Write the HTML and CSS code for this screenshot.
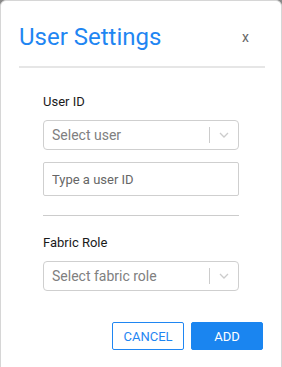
FILE: index.html
```html
<!DOCTYPE html>
<html>
<head>
    <title>User Settings</title>
    <link rel="stylesheet" href="styles.css">
</head>
<body>
    <div class="modal">
        <div class="modal-header">
            <h2 class="modal-title">User Settings</h2>
            <span class="close">x</span>
        </div>

        <div class="modal-body">
            <div class="field">
                <label>User ID</label>
                <div class="select">
                    <span class="select-value">Select user</span>
                    <span class="select-sep"></span>
                    <span class="select-arrow">
                        <svg width="10" height="6" viewBox="0 0 10 6"><path d="M1 1l4 4 4-4" fill="none" stroke="#ccc" stroke-width="1.3"/></svg>
                    </span>
                </div>
            </div>

            <input class="text-input" type="text" placeholder="Type a user ID">

            <hr class="divider">

            <div class="field">
                <label>Fabric Role</label>
                <div class="select">
                    <span class="select-value">Select fabric role</span>
                    <span class="select-sep"></span>
                    <span class="select-arrow">
                        <svg width="10" height="6" viewBox="0 0 10 6"><path d="M1 1l4 4 4-4" fill="none" stroke="#ccc" stroke-width="1.3"/></svg>
                    </span>
                </div>
            </div>
        </div>

        <div class="modal-footer">
            <button class="btn btn-outline">CANCEL</button>
            <button class="btn btn-primary">ADD</button>
        </div>
    </div>
</body>
</html>
```

FILE: styles.css
```css
html, body { margin: 0; padding: 0; background: #8a8a8a; }
body { font-family: Roboto, Arial, sans-serif; }
.modal { width: 282px; height: 380px; background: #fff; border: 1px solid #d6d6d6; border-radius: 6px 6px 0 0; box-sizing: border-box; }
.modal-header { display: flex; align-items: center; justify-content: space-between; margin: 0 16px 0 18px; padding: 21px 0 14px; border-bottom: 2px solid #e6e6e6; }
.modal-title { margin: 0; font-size: 24px; font-weight: 400; color: #1f86f2; line-height: 30px; }
.close { color: #666; font-size: 14px; margin-right: 16px; margin-top: -1px; }
.modal-body { padding: 26px 42px 0 42px; }
.field label { display: block; font-size: 13px; color: #1a1a1a; margin-bottom: 10px; line-height: 16px; }
.select { display: flex; align-items: center; height: 30px; border: 1px solid #cfcfcf; border-radius: 4px; box-sizing: border-box; }
.select-value { flex: 1; padding-left: 8px; font-size: 14px; color: #808080; }
.select-sep { width: 1px; height: 16px; background: #cccccc; }
.select-arrow { width: 28px; display: flex; justify-content: center; }
.text-input { display: block; width: 100%; box-sizing: border-box; height: 34px; margin-top: 12px; padding: 0 8px; border: 1px solid #cfcfcf; border-radius: 2px; font-family: Roboto, Arial, sans-serif; font-size: 13px; }
.text-input::placeholder { color: #666; }
.divider { border: none; border-top: 1px solid #cccccc; margin: 19px 0 19px; }
.modal-footer { display: flex; justify-content: flex-end; gap: 7px; padding: 31px 18px 0 0; }
.btn { height: 28px; font-family: Roboto, Arial, sans-serif; font-size: 13px; border-radius: 2px; cursor: pointer; padding: 0; }
.btn-outline { width: 72px; background: #fff; color: #1f86f2; border: 1px solid #1f86f2; }
.btn-primary { width: 72px; background: #1a85f0; color: #fff; border: 1px solid #1a85f0; }
```
